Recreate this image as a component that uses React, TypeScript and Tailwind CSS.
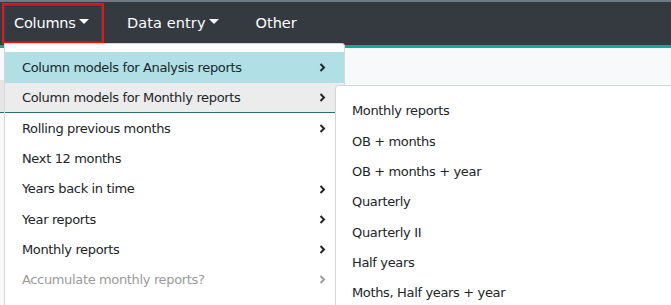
import React from "react";

const font = { fontFamily: '"DejaVu Sans", Verdana, sans-serif' };

function Chevron({ muted }: { muted?: boolean }) {
  return (
    <svg width="7" height="9" viewBox="0 0 7 9" className={muted ? "text-[#9aa0a6]" : "text-[#212529]"}>
      <path d="M1.5 1 L5 4.5 L1.5 8" fill="none" stroke="currentColor" strokeWidth="2" />
    </svg>
  );
}

function Caret() {
  return (
    <svg width="10" height="6" viewBox="0 0 10 6" className="ml-[3px] mt-[-3px]">
      <path d="M0 0 L10 0 L5 5 Z" fill="white" />
    </svg>
  );
}

const menuItems: { label: string; sub?: boolean; muted?: boolean; state?: "active" | "hover" }[] = [
  { label: "Column models for Analysis reports", sub: true, state: "active" },
  { label: "Column models for Monthly reports", sub: true, state: "hover" },
  { label: "Rolling previous months", sub: true },
  { label: "Next 12 months" },
  { label: "Years back in time", sub: true },
  { label: "Year reports", sub: true },
  { label: "Monthly reports", sub: true },
  { label: "Accumulate monthly reports?", sub: true, muted: true },
];

const subItems = [
  "Monthly reports",
  "OB + months",
  "OB + months + year",
  "Quarterly",
  "Quarterly II",
  "Half years",
  "Moths, Half years + year",
];

export default function App() {
  return (
    <div className="relative w-[671px] h-[305px] overflow-hidden bg-[#f8f9fa] text-[13px] text-[#212529]" style={font}>
      {/* Top bar */}
      <div className="h-[2px] bg-[#6d7b84]" />
      <nav className="flex items-center h-[46px] bg-[#343a40] border-b-[3px] border-[#17a89c] text-white text-[14.5px]">
        <div className="ml-[2px] h-[41px] w-[102px] border-2 border-[#e8141c] flex">
          <div className="flex-1 flex items-center pl-[9px] border border-[#2d4a60] tracking-[-0.2px]">
            Columns
            <Caret />
          </div>
        </div>
        <div className="flex items-center ml-[23px] tracking-[0.1px]">
          Data entry
          <Caret />
        </div>
        <div className="ml-[37px]">Other</div>
      </nav>

      {/* Page content peeking behind the menu */}
      <div className="absolute left-0 top-[80px] w-[4px] h-[32px] bg-[#e6e6e6]" />
      <div className="absolute left-0 top-[112px] w-[6px] h-[1px] bg-[#2e6a70]" />

      {/* Dropdown menu */}
      <div className="absolute left-[4px] top-[43px] w-[341px] h-[280px] bg-white border border-[#d6d6d6] rounded-tr-[3px] pt-[8px]">
        {menuItems.map((it, i) => (
          <div
            key={i}
            className={
              "flex items-center justify-between pl-[17px] pr-[18px] " +
              (i === 0 ? "h-[31px] " : "h-[30.3px] ") +
              (it.state === "active" ? "bg-[#b0dfe6] " : "") +
              (it.state === "hover" ? "bg-[#ececec] border-b border-[#2e6a70] " : "") +
              (it.muted ? "text-[#9a9a9a]" : "")
            }
          >
            <span className="tracking-[-0.35px]">{it.label}</span>
            {it.sub && <Chevron muted={it.muted} />}
          </div>
        ))}
      </div>

      {/* Submenu */}
      <div className="absolute left-[335px] top-[85px] w-[340px] h-[230px] bg-white border-l border-t border-[#d6d6d6] rounded-tl-[4px] pt-[10px]">
        {subItems.map((s) => (
          <div key={s} className="h-[30.3px] flex items-center pl-[16px] tracking-[-0.35px]">
            {s}
          </div>
        ))}
      </div>
    </div>
  );
}
